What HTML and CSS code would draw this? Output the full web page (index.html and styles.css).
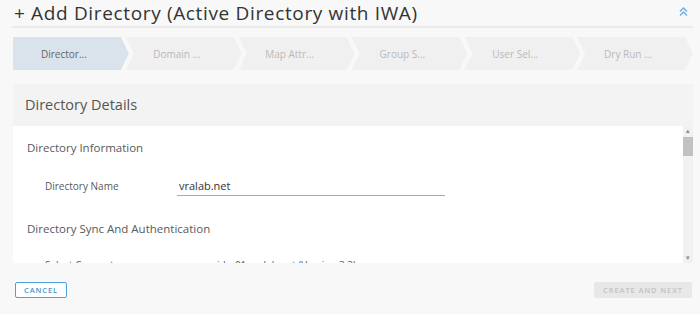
FILE: index.html
```html
<!DOCTYPE html>
<html lang="en">
<head>
    <meta charset="UTF-8">
    <title>Add Directory</title>
    <link rel="stylesheet" href="styles.css">
</head>
<body>
<div class="wizard">
    <div class="title-bar">
        <h1>+ Add Directory (Active Directory with IWA)</h1>
        <svg class="collapse-icon" width="9" height="9" viewBox="0 0 9 9">
            <path d="M1 4.5 L4.5 1 L8 4.5 M1 8.5 L4.5 5 L8 8.5" fill="none" stroke="#6aaee3" stroke-width="1.3"/>
        </svg>
    </div>

    <div class="stepper">
        <div class="step active">Director...</div>
        <div class="step">Domain ...</div>
        <div class="step">Map Attr...</div>
        <div class="step">Group S...</div>
        <div class="step">User Sel...</div>
        <div class="step">Dry Run ...</div>
    </div>

    <div class="panel">
        <div class="panel-head">Directory Details</div>
        <div class="panel-body">
            <div class="panel-content">
                <h2 class="section-title">Directory Information</h2>
                <div class="form-row">
                    <label class="row-label">Directory Name</label>
                    <div class="row-input">vralab.net</div>
                </div>
                <h2 class="section-title">Directory Sync And Authentication</h2>
                <div class="form-row connector-row">
                    <label class="row-label">Select Connector</label>
                    <div class="row-value">vidm01.vralab.net (Version 3.3)</div>
                </div>
            </div>
            <div class="scrollbar">
                <span class="scroll-arrow">&#9652;</span>
                <span class="scroll-thumb"></span>
                <span class="scroll-track"></span>
                <span class="scroll-arrow">&#9662;</span>
            </div>
        </div>
    </div>

    <div class="footer">
        <button class="btn btn-outline">CANCEL</button>
        <button class="btn btn-disabled" disabled>CREATE AND NEXT</button>
    </div>
</div>
</body>
</html>
```

FILE: styles.css
```css
body {
    margin: 0;
    background: #f8f8f8;
    font-family: "Open Sans", "Liberation Sans", sans-serif;
    color: #565656;
}

.wizard {
    width: 700px;
    height: 314px;
    overflow: hidden;
    padding: 0 7px 0 13px;
    box-sizing: border-box;
}

.title-bar {
    display: flex;
    align-items: center;
    justify-content: space-between;
    height: 26px;
    border-bottom: 2px solid #ebebeb;
    margin-left: -1px;
    padding: 0 5px 0 2px;
}

h1 {
    margin: 0;
    font-size: 19px;
    font-weight: 400;
    color: #333;
    letter-spacing: 0.65px;
    line-height: 24px;
}

.collapse-icon {
    margin-bottom: 4px;
}

.stepper {
    display: flex;
    margin-top: 9px;
    height: 33px;
}

.step {
    flex: 1;
    display: flex;
    align-items: center;
    justify-content: center;
    background: #f0f0f0;
    color: #b9b9b9;
    font-size: 10px;
    margin-left: -3px;
    padding-right: 14px;
    clip-path: polygon(0 0, calc(100% - 8px) 0, 100% 50%, calc(100% - 8px) 100%, 0 100%, 8px 50%);
}

.step:first-child {
    margin-left: 0;
    clip-path: polygon(0 0, calc(100% - 8px) 0, 100% 50%, calc(100% - 8px) 100%, 0 100%);
}

.step.active {
    background: #dae3eb;
    color: #666;
}

.panel {
    margin-top: 14px;
}

.panel-head {
    height: 42px;
    line-height: 42px;
    padding-left: 12px;
    background: #f3f3f3;
    font-size: 14.5px;
    color: #555;
}

.panel-body {
    display: flex;
    height: 137px;
    background: #fff;
}

.panel-content {
    flex: 1;
    overflow: hidden;
    padding-left: 14px;
}

.section-title {
    margin: 0;
    font-size: 11.5px;
    font-weight: 400;
    color: #595959;
    height: 44px;
    line-height: 44px;
}

.form-row {
    display: flex;
    align-items: center;
    height: 32px;
    padding-left: 18px;
    margin-bottom: 5px;
}

.connector-row {
    margin-top: -2px;
}

.row-label {
    width: 132px;
    font-size: 10px;
    color: #595959;
}

.row-input {
    width: 266px;
    padding-left: 2px;
    font-size: 11px;
    color: #333;
    line-height: 18px;
    border-bottom: 1px solid #aaa;
}

.row-value {
    padding-left: 35px;
    font-size: 10px;
    color: #595959;
}

.scrollbar {
    width: 10px;
    display: flex;
    flex-direction: column;
    background: #f1f1f1;
}

.scroll-arrow {
    height: 10px;
    font-size: 7px;
    line-height: 10px;
    text-align: center;
    color: #8a8a8a;
}

.scroll-thumb {
    height: 19px;
    margin: 1px 0;
    background: #c1c1c1;
}

.scroll-track {
    flex: 1;
}

.footer {
    display: flex;
    justify-content: space-between;
    padding: 19px 1px 0 2px;
}

.btn {
    height: 16px;
    padding: 0;
    border-radius: 2px;
    font-family: "Open Sans", "Liberation Sans", sans-serif;
    font-size: 7.5px;
    font-weight: 600;
    letter-spacing: 0.9px;
}

.btn-outline {
    width: 52px;
    background: #fff;
    border: 1px solid #4aa1dc;
    color: #4a93c9;
}

.btn-disabled {
    width: 98px;
    background: #e8e8e8;
    border: none;
    color: #c2c2c2;
}
```
